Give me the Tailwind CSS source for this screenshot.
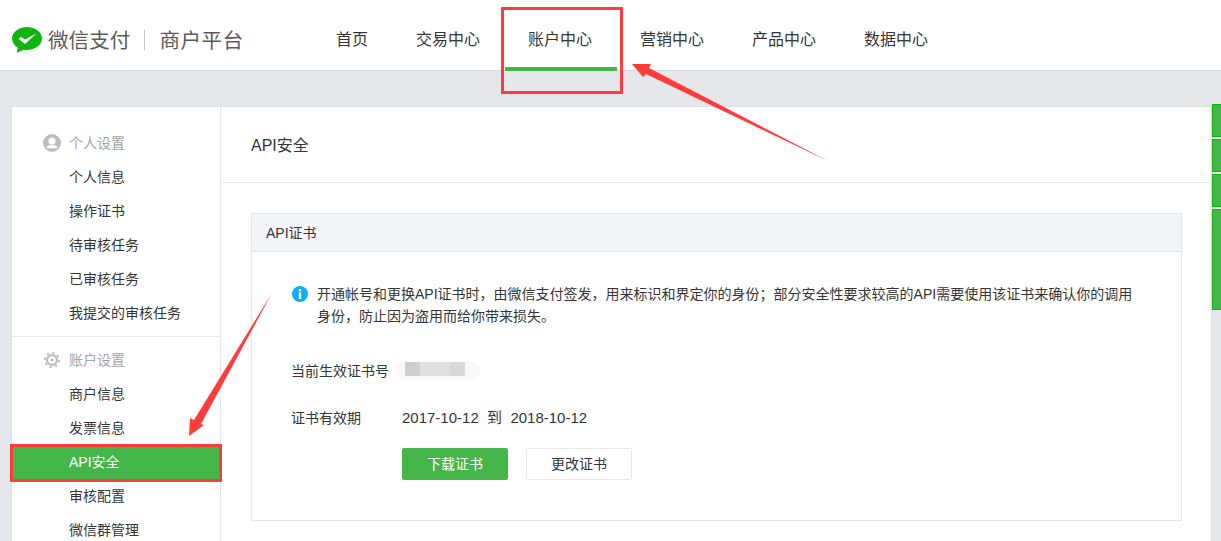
<!DOCTYPE html>
<html lang="zh-CN">
<head>
    <meta charset="UTF-8">
    <meta name="viewport" content="width=device-width, initial-scale=1.0">
    <title>API安全</title>
    <script src="https://cdn.jsdelivr.net/npm/@tailwindcss/browser@4"></script>
</head>
<body class="relative h-[541px] overflow-hidden bg-[#e6e7eb] text-[14px] text-[#353535] font-['Liberation_Sans','Noto_Sans_CJK_SC',sans-serif]">
    <!-- header -->
    <header class="flex h-[71px] items-start border-b border-[#d9dadc] bg-white">
        <div class="flex w-[312px] items-center pl-[12px] pt-[25px] text-[20.5px] leading-[28px] text-[#5a5a5a]">
            <svg class="h-[28px] w-[30px]" viewBox="0 0 30 28">
                <path d="M15 1C6.700 1 0 6.300 0 12.500c0 3.600 2.200 6.800 5.700 8.900L4.700 27l6.800-3.300c1.100.2 2.300.3 3.500.3 8.300 0 15-5.200 15-11.500S23.300 1 15 1z" fill="#0fb50f"/>
                <path d="M6.500 13l2.500-2 4 2.500L24.500 7.500 13 18z" fill="#fff"/>
            </svg>
            <span class="ml-[6px] mt-[2px] tracking-[0.1px]">微信支付</span>
            <span class="mx-[14px] h-[20px] w-px bg-[#c8c8c8]"></span>
            <span class="mt-[2px] tracking-[0.6px]">商户平台</span>
        </div>
        <nav class="flex text-[16px]">
            <a class="px-6 pt-[29px] leading-[22px]">首页</a>
            <a class="px-6 pt-[29px] leading-[22px]">交易中心</a>
            <a class="-mr-px ml-px h-[71px] border-b-4 border-[#44b549] pl-[23px] pr-[25px] pt-[29px] leading-[22px]">账户中心</a>
            <a class="px-6 pt-[29px] leading-[22px]">营销中心</a>
            <a class="px-6 pt-[29px] leading-[22px]">产品中心</a>
            <a class="px-6 pt-[29px] leading-[22px]">数据中心</a>
        </nav>
    </header>

    <main class="ml-[11px] mr-[9px] mt-[35px] flex h-[435px] overflow-hidden border border-b-0 border-[#dfe0e4] bg-white">
        <!-- sidebar -->
        <aside class="h-full w-[209px] shrink-0 overflow-hidden border-r border-[#e4e5e8]">
            <div class="border-b border-[#e7e7eb] pb-[6px] pt-[19px]">
                <div class="flex h-[34px] items-center gap-[8px] pl-[31px] text-[#a3a3a3]">
                    <svg class="h-[18px] w-[18px]" viewBox="0 0 18 18">
                        <circle cx="9" cy="9" r="9" fill="#bdbdbd"/>
                        <circle cx="9" cy="7" r="3.600" fill="#fff"/>
                        <path d="M3.500 14.200c.6-2.500 3-3.400 5.500-3.400s4.900.9 5.500 3.400z" fill="#fff"/>
                    </svg>
                    <span>个人设置</span>
                </div>
                <a class="block h-[34px] pl-[57px] leading-[34px]">个人信息</a>
                <a class="block h-[34px] pl-[57px] leading-[34px]">操作证书</a>
                <a class="block h-[34px] pl-[57px] leading-[34px]">待审核任务</a>
                <a class="block h-[34px] pl-[57px] leading-[34px]">已审核任务</a>
                <a class="block h-[34px] pl-[57px] leading-[34px]">我提交的审核任务</a>
            </div>
            <div class="pt-[6px]">
                <div class="flex h-[34px] items-center gap-[8px] pl-[31px] text-[#a3a3a3]">
                    <svg class="h-[18px] w-[18px]" viewBox="-1 -1 20 20">
                        <circle cx="9" cy="9" r="5.500" fill="none" stroke="#bdbdbd" stroke-width="2.500"/>
                        <circle cx="9" cy="9" r="8" fill="none" stroke="#bdbdbd" stroke-width="2" stroke-dasharray="2.800 3.480"/>
                        <circle cx="9" cy="9" r="1.800" fill="#bdbdbd"/>
                    </svg>
                    <span>账户设置</span>
                </div>
                <a class="block h-[34px] pl-[57px] leading-[34px]">商户信息</a>
                <a class="block h-[34px] pl-[57px] leading-[34px]">发票信息</a>
                <a class="block h-[34px] bg-[#44b549] pl-[57px] leading-[34px] text-white">API安全</a>
                <a class="block h-[34px] pl-[57px] leading-[34px]">审核配置</a>
                <a class="block h-[34px] pl-[57px] leading-[34px]">微信群管理</a>
            </div>
        </aside>

        <!-- content -->
        <section class="min-w-0 flex-1">
            <h1 class="h-[76px] border-b border-[#e7e7eb] pl-[30px] text-[16px] leading-[78px]">API安全</h1>
            <div class="ml-[30px] mr-[29px] mt-[30px] h-[308px] border border-[#e4e5e8]">
                <div class="h-[38px] border-b border-[#e4e5e8] bg-[#f4f5f9] pl-[14px] leading-[39px]">API证书</div>
                <div class="pl-[39px] pt-[31px]">
                    <div class="flex">
                        <svg class="ml-px mt-[3px] h-[16px] w-[16px] shrink-0" viewBox="0 0 16 16">
                            <circle cx="8" cy="8" r="8" fill="#10aeff"/>
                            <rect x="6.800" y="3" width="2.400" height="2.400" fill="#fff"/>
                            <rect x="6.800" y="6.500" width="2.400" height="6.500" fill="#fff"/>
                        </svg>
                        <p class="ml-[9px] w-[822px] leading-[22px]">开通帐号和更换API证书时，由微信支付签发，用来标识和界定你的身份；部分安全性要求较高的API需要使用该证书来确认你的调用身份，防止因为盗用而给你带来损失。</p>
                    </div>
                    <div class="mt-[33px] flex h-[22px] items-center">
                        <span class="w-[105px]">当前生效证书号</span>
                        <div class="flex h-[18px] w-[84px] items-start overflow-hidden rounded-full bg-[#f8f8f8]">
                            <span class="ml-[9px] h-[14px] w-[15px] bg-[#cfcfcf]"></span>
                            <span class="h-[14px] w-[30px] bg-[#e0e0e0]"></span>
                            <span class="h-[14px] w-[15px] bg-[#d8d8d8]"></span>
                        </div>
                    </div>
                    <div class="mt-[25px] flex h-[22px] items-center">
                        <span class="w-[111px]">证书有效期</span>
                        <span class="text-[15px]">2017-10-12&nbsp; 到 &nbsp;2018-10-12</span>
                    </div>
                    <div class="ml-[111px] mt-[19px] flex gap-[18px]">
                        <button class="h-[32px] w-[106px] rounded-[2px] bg-[#44b549] text-white">下载证书</button>
                        <button class="h-[32px] w-[106px] rounded-[2px] border border-[#e4e8eb] bg-white">更改证书</button>
                    </div>
                </div>
            </div>
        </section>
    </main>

    <!-- side tabs, cut off by the window edge -->
    <div class="absolute left-[1212px] top-[104px] flex w-[9px] flex-col gap-[2px]">
        <div class="h-[33px] border border-r-0 border-[#09bb07] bg-[#44b549]"></div>
        <div class="h-[33px] border border-r-0 border-[#09bb07] bg-[#44b549]"></div>
        <div class="h-[33px] border border-r-0 border-[#09bb07] bg-[#44b549]"></div>
        <div class="h-[101px] border border-r-0 border-[#09bb07] bg-[#44b549]"></div>
    </div>

    <!-- red annotations drawn on top of the screenshot -->
    <div class="absolute left-[501px] top-[7px] h-[87px] w-[122px] border-[3px] border-[#ff3b3b]"></div>
    <div class="absolute left-[10px] top-[444px] h-[38px] w-[212px] border-[3px] border-[#ff3b3b]"></div>
    <svg class="absolute left-0 top-0 h-[541px] w-[1221px]" viewBox="0 0 1221 541">
        <polygon points="632,64 651,64 649,68 828,161 646,74 643,77" fill="#ff3b3b"/>
        <polygon points="272,293 201,424 204,425 189,436 190,418 194,420" fill="#ff3b3b"/>
    </svg>
</body>
</html>
